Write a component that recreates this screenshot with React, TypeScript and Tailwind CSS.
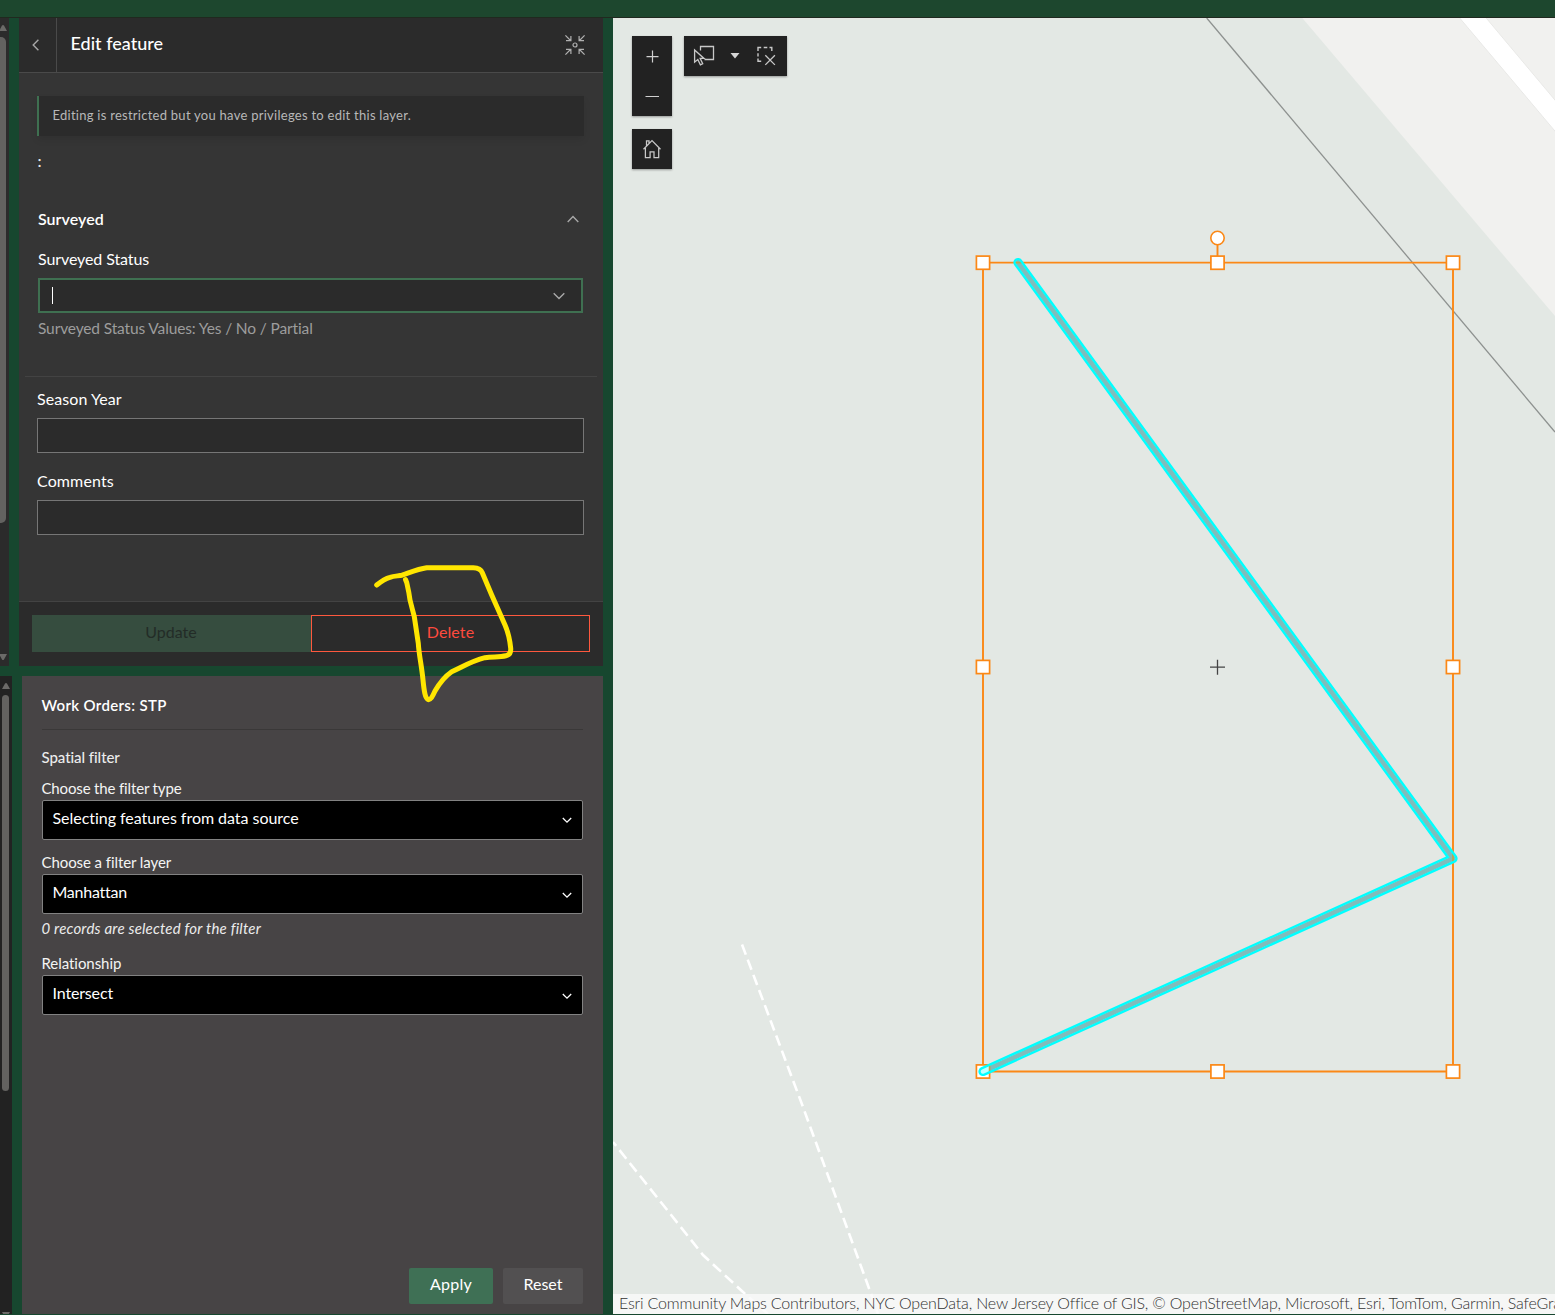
import React from "react";

function Chevron({ d, className = "" }: { d: string; className?: string }) {
  return (
    <svg viewBox="0 0 16 16" className={"h-4 w-4 shrink-0 fill-none " + className} stroke="currentColor" strokeWidth="1.4">
      <path d={d} />
    </svg>
  );
}

const UP = "M2.7 10.9 8 5.6l5.3 5.3";
const DOWN = "M2.7 5.2 8 10.5l5.3-5.3";

function ScrollArrow({ up = false, className = "" }: { up?: boolean; className?: string }) {
  return (
    <svg viewBox="0 0 8 6" className={"h-[6px] w-[8px] shrink-0 " + className} fill="#6b6a68">
      <path d={up ? "M0 6 3 .6Q4-.6 5 .6L8 6z" : "M0 0 3 5.4Q4 6.6 5 5.4L8 0z"} />
    </svg>
  );
}

function Select({ label, value, labelClass, boxClass, valueClass, chevronClass = "mt-[1px]" }: {
  label: string; value: string; labelClass: string; boxClass: string; valueClass: string; chevronClass?: string;
}) {
  return (
    <>
      <div className={"-ml-[0.5px] h-5 text-[15px] leading-5 whitespace-nowrap text-[#f4f4f4] " + labelClass}>{label}</div>
      <div className={"flex h-10 items-center justify-between rounded-[2px] border border-[#828282] bg-black pr-[9px] pl-[9.5px] text-white " + boxClass}>
        <span className={"-mt-[4px] text-[16px] leading-5 whitespace-nowrap " + valueClass}>{value}</span>
        <svg viewBox="0 0 12 12" className={"h-3 w-3 fill-none " + chevronClass} stroke="currentColor" strokeWidth="1.3">
          <path d="M1.8 4 6 8.1 10.2 4" />
        </svg>
      </div>
    </>
  );
}

function EditPanel() {
  return (
    <section className="flex h-[648px] w-[584px] flex-col bg-[#353535] text-white">
      <header className="flex h-[55px] shrink-0 border-b border-[#4a4a4a] bg-[#2b2b2b]">
        <div className="flex w-[38px] items-center justify-center border-r border-[#4a4a4a] pr-[3px] text-[#a8a8a8]">
          <Chevron d="M10.4 2.8 5.2 8l5.2 5.2" />
        </div>
        <h1 className="ml-[13.5px] flex-1 pt-[14px] text-[18px] leading-[22px] font-medium tracking-[0.02px]">Edit feature</h1>
        <svg viewBox="0 0 20 20" className="mt-[17px] mr-[18px] h-5 w-5 fill-none" stroke="#b0b0b0" strokeWidth="1.2">
          <path d="M.4.4 5.5 5.5M1 5.6h4.9V1M19.6.4 14.5 5.5M19 5.6h-4.9V1M.4 19.6l5.1-5.1M1 14.4h4.9V19M19.6 19.6l-5.1-5.1M19 14.4h-4.9V19" />
          <circle cx="10" cy="10" r="2" />
        </svg>
      </header>
      <div className="flex-1 px-[18px] pt-[23px]">
        <div className="mr-[1px] flex h-10 items-center border-l-2 border-[#3f7051] bg-[#2b2b2b] pl-[13.5px] text-[13px] leading-5 tracking-[0.26px] whitespace-nowrap text-[#b8b8b8] shadow-[0_4px_8px_-1px_rgba(0,0,0,0.1)]">
          <span className="-mt-[2px]">Editing is restricted but you have privileges to edit this layer.</span>
        </div>
        <div className="mt-[15px] h-5 pl-[0.5px] text-[16px] leading-5 font-semibold text-[#e8e8e8]">:</div>
        <div className="mt-[38px] flex h-5 items-center justify-between pr-1 pl-[1px]">
          <span className="text-[16px] leading-5 font-semibold tracking-[0.03px]">Surveyed</span>
          <Chevron d={UP} className="text-[#a8a8a8]" />
        </div>
        <div className="mt-5 h-5 pl-[1px] text-[16px] leading-5 tracking-[-0.1px]">Surveyed Status</div>
        <div className="mt-[9px] mr-[2px] ml-[1px] flex h-[35px] items-center justify-between border-2 border-[#3f7051] bg-[#2b2b2b] pr-[14px] pl-3">
          <span className="h-[17px] w-px bg-white" />
          <Chevron d={DOWN} className="text-[#a8a8a8]" />
        </div>
        <div className="mt-[5px] h-5 pl-[1px] text-[15.5px] leading-5 tracking-[-0.13px] whitespace-nowrap text-[#9d9d9d]">
          Surveyed Status Values: Yes / No / Partial
        </div>
        <div className="-mx-3 mt-[38px] h-px bg-[#434343]" />
        <div className="mt-3 h-5 text-[16px] leading-5 tracking-[0.08px]">Season Year</div>
        <div className="mt-[9px] mr-[1px] h-[35px] border border-[#767676] bg-[#2b2b2b]" />
        <div className="mt-[18px] h-5 text-[16px] leading-5 tracking-[0.12px]">Comments</div>
        <div className="mt-[9px] mr-[1px] h-[35px] border border-[#767676] bg-[#2b2b2b]" />
      </div>
      <footer className="flex h-[65px] shrink-0 border-t border-[#434343] bg-[#2b2b2b] px-[13px] pt-[13px] text-[16px] leading-5">
        <div className="flex h-[37px] w-[279px] items-center justify-center bg-[#364d3f] pr-[1px] pb-[3px] text-[#232c27]">Update</div>
        <div className="flex h-[37px] w-[279px] items-center justify-center border border-[#fe583e] pb-[3px] tracking-[0.1px] text-[#fe4a3e]">Delete</div>
      </footer>
    </section>
  );
}

function WorkOrdersPanel() {
  return (
    <section className="flex h-[638px] w-[581px] flex-col bg-[#474445] px-5 pt-[19px] pb-[10px] text-white">
      <h2 className="-ml-[0.5px] h-5 text-[15px] leading-5 font-semibold tracking-[0.33px]">Work Orders: STP</h2>
      <div className="mt-[14px] h-px bg-[#3a3838]" />
      <h3 className="mt-[17px] -ml-[0.5px] h-5 text-[15px] leading-5 font-medium tracking-[-0.06px] text-[#ececec]">Spatial filter</h3>
      <Select label="Choose the filter type" value="Selecting features from data source" labelClass="mt-[11px] tracking-[-0.15px]" boxClass="mt-[2px]" valueClass="tracking-[-0.04px]" chevronClass="-mt-[1px]" />
      <Select label="Choose a filter layer" value="Manhattan" labelClass="mt-3 tracking-[-0.08px]" boxClass="mt-[2px]" valueClass="tracking-[-0.25px]" />
      <p className="mt-[4px] -ml-[0.5px] h-5 text-[15px] leading-5 tracking-[0.2px] text-[#ececec] italic">0 records are selected for the filter</p>
      <Select label="Relationship" value="Intersect" labelClass="mt-[15px] tracking-[-0.05px]" boxClass="mt-[2px]" valueClass="tracking-[-0.15px]" />
      <div className="mt-auto flex justify-end gap-[10px] text-[16px] leading-5">
        <div className="flex h-9 w-[84px] items-center justify-center rounded-[2px] bg-[#3f7055] pb-[4px] tracking-[0.2px]">Apply</div>
        <div className="flex h-9 w-20 items-center justify-center rounded-[2px] bg-[#525051] pb-[4px]">Reset</div>
      </div>
    </section>
  );
}

const HANDLES = [
  [983, 262.7], [1217.5, 262.7], [1453, 262.7],
  [983, 667], [1453, 667],
  [983, 1071.5], [1217.5, 1071.5], [1453, 1071.5],
];
const FEATURE = "M1018 262.5 1453 858.5 983 1071.5";

function MapView() {
  return (
    <section className="relative h-[1296px] w-[942px] overflow-hidden bg-[#e3e8e4]">
      <svg viewBox="613 18 942 1296" className="block h-[1296px] w-[942px] fill-none">
        <defs>
          <mask id="casing" maskUnits="userSpaceOnUse" x="613" y="18" width="942" height="1296">
            <path d={FEATURE} stroke="#fff" strokeWidth="9.2" strokeLinejoin="round" strokeLinecap="round" />
            <path d={FEATURE} stroke="#000" strokeWidth="4.4" strokeLinejoin="round" strokeLinecap="round" />
          </mask>
        </defs>
        <path d="M1302.3 18H1555V316z" fill="#f1f1ef" />
        <path d="M1458 16 1557 133.5V102.5L1484.5 16z" fill="#fff" stroke="#e9e9e7" />
        <path d="M1206.7 18 1555 432" stroke="#8d918f" strokeWidth="1.3" />
        <path d="M742 944.5 803 1107 870 1291 878 1314" stroke="#fff" strokeWidth="2.6" strokeDasharray="10.8 5.4" />
        <path d="M613 1142 703 1255 743 1292 768 1314" stroke="#fff" strokeWidth="2.6" strokeDasharray="11 5.4" strokeDashoffset="6" />
        <path d={FEATURE} stroke="#aca6a5" strokeWidth="5" strokeLinejoin="round" strokeLinecap="round" />
        <g stroke="#fb8816" strokeWidth="1.9">
          <path d="M983 262.6H1453V1071.5H983zM1217.5 245v12" />
          <circle cx="1217.5" cy="238" r="6.7" fill="#fff" strokeWidth="1.6" />
          {HANDLES.map(([x, y]) => (
            <rect key={x + "-" + y} x={x - 6.6} y={y - 6.6} width="13.2" height="13.2" fill="#fff" strokeWidth="1.7" />
          ))}
        </g>
        <path d={FEATURE} stroke="#00ffff" strokeOpacity=".25" strokeWidth="5" strokeLinejoin="round" strokeLinecap="round" />
        <rect x="613" y="18" width="942" height="1296" fill="#00ffff" mask="url(#casing)" />
        <path d="M1210 667.2h15M1217.5 659.7v15" stroke="#444" strokeWidth="1.3" />
      </svg>

      <div className="absolute top-[18px] left-[19px] flex flex-col gap-[13px]">
        <div className="h-20 w-10 bg-[#222] shadow-[0_1px_2px_rgba(0,0,0,0.35)]">
          <svg viewBox="0 0 40 80" className="h-20 w-10 fill-none" stroke="#d0d0d0" strokeWidth="1.2">
            <path d="M14.5 20.6h12M20.5 14.5v12M13.5 60.5h13.5" />
          </svg>
        </div>
        <div className="h-10 w-10 bg-[#222] shadow-[0_1px_2px_rgba(0,0,0,0.35)]">
          <svg viewBox="0 0 40 40" className="h-10 w-10 fill-none" stroke="#c8c8c8" strokeWidth="1.25">
            <path d="M11.5 20.2 20 11.6l8.5 8.6M14.5 16.8v-5h2.5v2.4M13.4 19v9.5h4.7v-5.6h3.9v5.6h4.7V19" />
          </svg>
        </div>
      </div>

      <div className="absolute top-[18px] left-[71px] h-10 w-[103px] bg-[#222] shadow-[0_1px_2px_rgba(0,0,0,0.35)]">
        <svg viewBox="684 36 103 40" className="h-10 w-[103px] fill-none" stroke="#c8c8c8" strokeWidth="1.3">
          <path d="M700.5 50.5v-4h13v13h-9" />
          <path d="M694.6 50v12.2l3.2-2.7 2.6 5.4 2.3-1.1-2.6-5.4h3.9z" />
          <path d="M730.5 53h9l-4.5 5.6z" fill="#d6d6d6" stroke="none" />
          <path d="M758 51v-3.500h3.200M763.700 47.500h3.600M769.500 47.500h2.300V51M758 53.300v3.200M758 58.500v2.700h3.200" strokeWidth="1.4" />
          <path d="m765.300 55.300 9.600 9.600M774.900 55.300l-9.600 9.600" />
        </svg>
      </div>

      <div className="absolute inset-x-0 bottom-0 h-5 overflow-hidden bg-[#fafafa]/80 pl-[6px] text-[16px] leading-[17px] font-light tracking-[-0.18px] whitespace-nowrap text-[#323232]">
        Esri Community Maps Contributors, NYC OpenData, New Jersey Office of GIS, © OpenStreetMap, Microsoft, Esri, TomTom, Garmin, SafeGraph
      </div>
    </section>
  );
}

export default function App() {
  return (
    <div className="relative flex h-[1315px] w-[1555px] flex-col overflow-hidden bg-[#17472f] font-[Lato,sans-serif]">
      <div className="h-[18px] shrink-0 border-b border-[#20291f] bg-[#1d472e]" />
      <div className="flex gap-[10px]">
        <div className="flex w-[603px] flex-col gap-[10px]">
          <div className="flex gap-[10px]">
            <div className="flex h-[648px] w-[9px] flex-col overflow-hidden bg-[#2b2b2b]">
              <ScrollArrow up className="mt-[7px] -ml-[1.5px]" />
              <div className="mt-[6px] -ml-1 h-[486px] w-[10px] rounded-full bg-[#636260]" />
              <ScrollArrow className="mt-auto mb-[6px] -ml-[1.5px]" />
            </div>
            <EditPanel />
          </div>
          <div className="flex gap-[10px]">
            <div className="flex h-[638px] w-3 flex-col overflow-hidden bg-[#222]">
              <ScrollArrow up className="mt-[7px] ml-[1.5px]" />
              <div className="mt-[6px] ml-[2px] h-[396px] w-[7px] rounded-full bg-[#636260]" />
              <ScrollArrow className="mt-auto -mb-[4px] ml-[1.5px]" />
            </div>
            <WorkOrdersPanel />
          </div>
        </div>
        <MapView />
      </div>

      <svg viewBox="366 556 156 156" className="pointer-events-none absolute top-[556px] left-[366px] h-[156px] w-[156px] fill-none" stroke="#ffe600" strokeWidth="5" strokeLinecap="round" strokeLinejoin="round">
        <path d="M376.7 585C381 581.5 385 578.6 390 577.3C394 576 398 576 402 575.2C410 572.5 418 569 426.7 567.8H473.3C478 568 481 569.5 482.3 572.7L491.7 595L505 625C508.5 633 510 641 510.7 648.3C511 652 510 655 506 655.8C499 657.3 492 656.5 485 657.7C472 661 463 666.5 451.7 671.7C444 677 439 684 435 691C432.5 696.5 430.5 700 428.3 699.6C425 698.5 424 690 423 680C421.5 665 419 655 418.3 643.3L414.3 616.7C412 608 411 604 410 600C409 592 407.5 586 406.7 582.5L405.5 579.5" />
      </svg>
    </div>
  );
}
